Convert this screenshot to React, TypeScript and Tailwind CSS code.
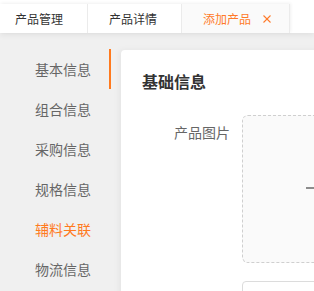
import React from 'react';

const tabs = [
  { label: '产品管理', cls: 'w-[88px] pl-[15px]' },
  { label: '产品详情', cls: 'w-[94px] pl-[21px]' },
];

const navItems = ['基本信息', '组合信息', '采购信息', '规格信息', '辅料关联', '物流信息'];

function App() {
  return (
    <div
      className="w-[314px] h-[291px] overflow-hidden bg-[#f0f0f0] flex flex-col"
      style={{ fontFamily: '"Noto Sans CJK SC", "Noto Sans", sans-serif' }}
    >
      {/* Tab bar */}
      <div className="h-[33px] shrink-0 bg-white relative z-10 shadow-[0_2px_6px_rgba(0,0,0,0.07)]">
        <div className="mt-[4px] h-[29px] w-[290px] flex shadow-[1px_-1px_3px_rgba(0,0,0,0.06)]">
          {tabs.map((t) => (
            <div
              key={t.label}
              className={`${t.cls} h-full flex items-center border-r border-[#ebebeb] text-[12px] text-[#333]`}
            >
              {t.label}
            </div>
          ))}
          <div className="flex-1 h-full flex items-center pl-[21px] gap-[12px] bg-[#fafafa] border-r border-[#ebebeb] text-[12px] text-[#ff7a2a]">
            <span>添加产品</span>
            <svg width="8" height="8" viewBox="0 0 8 8" stroke="#ff7a2a" strokeWidth="1.1">
              <line x1="0.5" y1="0.5" x2="7.5" y2="7.5" />
              <line x1="7.5" y1="0.5" x2="0.5" y2="7.5" />
            </svg>
          </div>
        </div>
      </div>

      <div className="flex flex-1 pt-[16px]">
        {/* Side nav */}
        <div className="w-[111px] shrink-0 mr-[10px]">
          {navItems.map((item, i) => (
            <div
              key={item}
              className={`h-[40px] flex items-center pl-[35px] text-[14px] ${
                i === 0 ? 'border-r-2 border-[#ff7a1e] text-[#666]' : i === 4 ? 'text-[#ff7a1e]' : 'text-[#666]'
              }`}
            >
              {item}
            </div>
          ))}
        </div>

        {/* Card */}
        <div className="flex-1 mt-[1px] bg-white rounded-tl-[4px] shadow-[-2px_0_6px_rgba(0,0,0,0.05)] pl-[21px] pt-[19px]">
          <h2 className="text-[16px] font-bold text-[#333] leading-[24px]">基础信息</h2>
          <div className="flex mt-[22px] ml-[32px]">
            <div className="w-[56px] text-[14px] text-[#666] leading-[20px] pt-[7px]">产品图片</div>
            <div className="ml-[12px] flex flex-col gap-[18px]">
              <div className="w-[148px] h-[148px] shrink-0 rounded-[6px] border border-dashed border-[#cfcfcf] bg-[#fafafa] flex items-center justify-center">
                <svg className="mb-[3px]" width="20" height="20" viewBox="0 0 20 20" stroke="#8c8c8c" strokeWidth="2">
                  <line x1="0" y1="10" x2="20" y2="10" />
                  <line x1="10" y1="0" x2="10" y2="20" />
                </svg>
              </div>
              <div className="w-[148px] h-[32px] shrink-0 rounded-[4px] border border-[#dcdcdc] bg-white" />
            </div>
          </div>
        </div>
      </div>
    </div>
  );
}

export default App;
